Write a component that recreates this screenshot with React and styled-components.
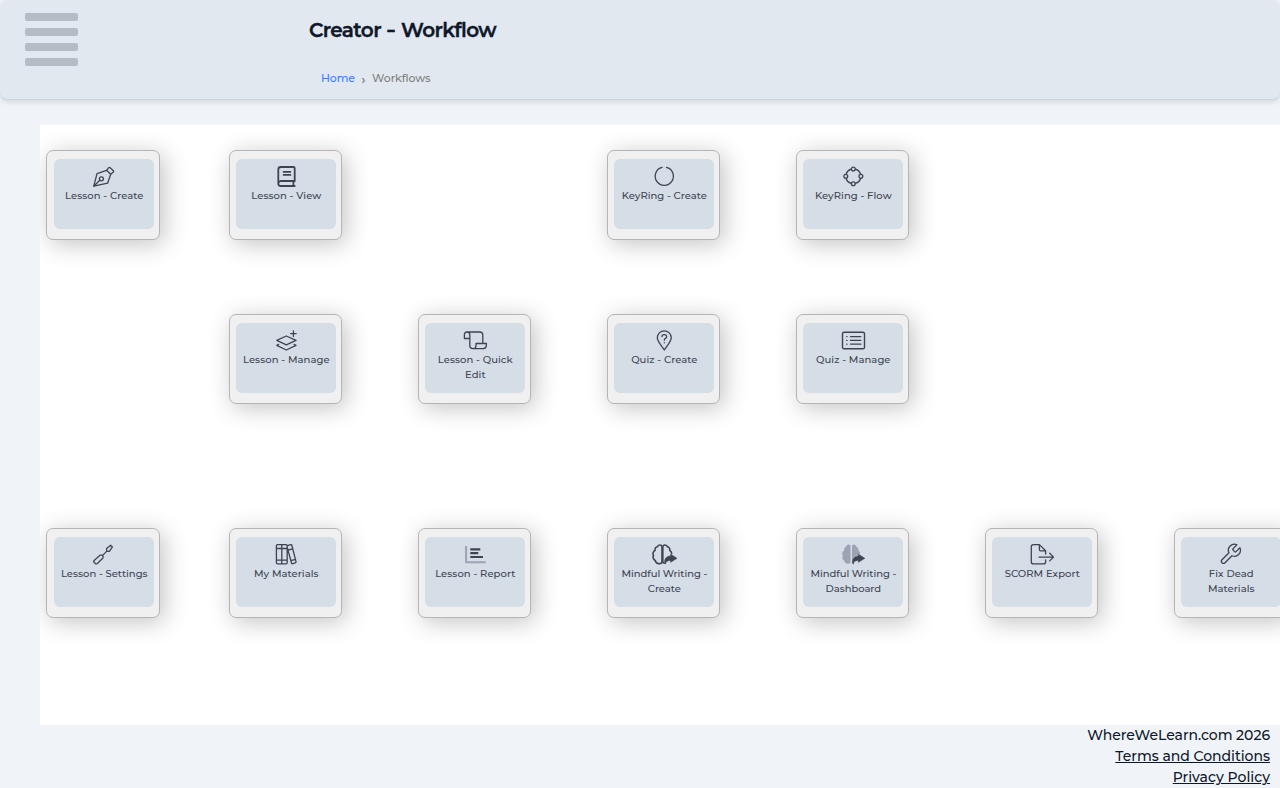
import React from "react";
import styled, { createGlobalStyle } from "styled-components";

const GlobalStyle = createGlobalStyle`
  * { box-sizing: border-box; }
  html, body { margin: 0; height: 100%; overflow: hidden; }
  body {
    background: #f0f4f9;
    color: #0f172a;
    font-family: Montserrat, Inter, sans-serif;
    font-size: 14px;
    font-weight: 500;
  }
`;

const Header = styled.header`
  display: flex;
  height: 100px;
  background: #e1e8f0;
  border-bottom: 1px solid #cbd5e1;
  border-radius: 8px;
  box-shadow: 0 2px 5px rgba(0, 0, 0, 0.12);
`;

const MenuButton = styled.button`
  display: flex;
  flex-direction: column;
  gap: 7px;
  width: 309px;
  padding: 13px 0 0 25px;
  border: 0;
  background: none;
`;

const MenuBar = styled.span`
  width: 52.5px;
  height: 8px;
  border-radius: 2px;
  background: #b5bcc6;
`;

const Heading = styled.div`
  display: flex;
  flex-direction: column;
`;

const Title = styled.h1`
  margin: 17px 0 0;
  font-size: 20px;
  line-height: 26px;
  font-weight: 600;
  letter-spacing: -0.62px;
  word-spacing: 1.6px;
  -webkit-text-stroke: 0.35px currentColor;
  white-space: nowrap;
`;

const Dash = styled.span`
  display: inline-block;
  transform: scaleX(1.3);
`;

const Breadcrumb = styled.nav`
  display: flex;
  margin: 27px 0 0 12px;
  font-size: 11px;
  line-height: 16px;
  color: #808080;
  letter-spacing: -0.06px;
`;

const Separator = styled.span`
  width: 17px;
  padding-top: 2px;
  text-align: center;
  font-size: 12px;
  font-weight: 600;
`;

const HomeLink = styled.a`
  color: #3b7ff6;
`;

const Canvas = styled.main`
  display: grid;
  grid-template-columns: 183px repeat(6, 189px);
  grid-template-rows: 164px 214px 90px;
  align-content: start;
  width: 1240px;
  height: 600px;
  margin: 25px 0 0 40px;
  padding: 25px 0 0 6px;
  background: #fff;
  overflow: hidden;
`;

const Card = styled.a`
  grid-column: ${(p) => p.$col};
  grid-row: ${(p) => p.$row};
  width: ${(p) => (p.$col === 1 ? 114 : 113)}px;
  height: 90px;
  padding: 8px 0 0 ${(p) => (p.$col === 1 ? 7 : 6)}px;
  border: 1px solid #b5b5b5;
  border-radius: 7px;
  background: #f0f0f0;
  box-shadow: 4px 4px 24px rgba(0, 0, 0, 0.24);
`;

const Tile = styled.div`
  display: flex;
  flex-direction: column;
  align-items: center;
  width: 100px;
  height: 70px;
  padding-top: 6px;
  border-radius: 6px;
  background: #d5dde6;
  color: #3f4453;
`;

const Icon = styled.svg`
  width: 28px;
  height: 22px;
  margin-bottom: 1px;
  flex: none;
  fill: none;
  stroke: currentColor;
  stroke-width: 1.3;
  stroke-linejoin: round;
  stroke-linecap: round;
`;

const Label = styled.span`
  padding-left: 0.6px;
  font-size: 10px;
  line-height: 15px;
  text-align: center;
  white-space: pre;
  letter-spacing: ${(p) => p.$spacing}px;
`;

const Footer = styled.footer`
  display: flex;
  flex-direction: column;
  align-items: flex-end;
  padding-right: 10px;
  line-height: 21px;
`;

const FooterText = styled.span`
  letter-spacing: ${(p) => p.$spacing}px;
`;

const FooterLink = styled(FooterText).attrs({ as: "a" })`
  text-decoration: underline;
`;

const brainLeft =
  "M12 3.6C11.5 1.4 8.2 1.4 7.4 3.8 5.6 4 4.6 5.8 5.1 7.4 3.3 8.4 2.3 10.6 3.5 12.4 2.4 14.5 3.6 16.7 5.3 17.4 5.6 20.8 11.2 22.2 12 18.8Z";
const brainRight =
  "M12.8 3.6C13.3 1.4 16.7 1.4 17.4 3.8 19.2 4 20.2 5.8 19.7 7.4 21 8.2 21.7 9.2 21.7 10.6";
const shareArrow =
  "M15.6 20.6H14.9C14 16.5 15.8 13 20.6 12.9V11.2L27 15.3 20.6 19.3V17.5C17.5 17.3 16.1 18.4 15.6 20.6Z";

const icons = {
  pen: (
    <>
      <path d="M3.8 21.2 7 8.7 16.6 5.3 20.7 9.2 17.6 18.2Z" />
      <path d="m16.6 5.3 2.1-2.6q.7-.6 1.4 0L23.4 5.7q.6.7 0 1.4L20.7 9.2M4 21l5.8-5.7" />
      <circle cx="11.4" cy="13.8" r="2" />
    </>
  ),
  book: (
    <g strokeWidth="1.8">
      <path d="M22.7 16.2V3.2q0-1.2-1.2-1.2H8.8Q6.3 2 6.3 4.5V18.5Q6.3 21 8.8 21H22.7M6.5 17.9Q7 16 8.8 16H22.7M21.4 16.2V21" />
      <path d="M11.6 6.8h6.8M11.6 9.9h6.8" />
    </g>
  ),
  ring: <path d="M12.1 2.4A9.1 9.1 0 1 0 16.5 2.4" />,
  nodes: (
    <>
      <path d="M12 4.2A7.8 7.8 0 0 0 7.1 9.1M7.1 13.7A7.8 7.8 0 0 0 12 18.4M16.6 18.4A7.8 7.8 0 0 0 21.6 13.7M21.6 9.1A7.8 7.8 0 0 0 16.6 4.2" />
      <circle cx="14.3" cy="4" r="1.9" />
      <circle cx="14.3" cy="18.7" r="1.9" />
      <circle cx="6.8" cy="11.3" r="1.9" />
      <circle cx="21.9" cy="11.3" r="1.9" />
    </>
  ),
  layers: (
    <path d="M4.8 11.4 14.3 7l9.7 4.4-9.7 4.4ZM6.6 15.4l-1.8 1 9.5 4.6 9.7-4.6-1.8-1M21.4 1.8v5.6M18.6 4.6h5.6" />
  ),
  scroll: (
    <path d="M6 3H18.8Q21.8 3 21.8 6V14.4M6 3Q3.4 3 3.4 5.6V9.5H8.8M6 3Q8.8 3 8.8 5.7V16.8Q8.8 19.6 11.8 19.6H22.3Q25.2 19.4 25.4 16.2V14.5H15V16.7Q15 19.6 12 19.6" />
  ),
  pin: (
    <>
      <path d="M14.3 21C12 17.6 7.3 12.4 7.3 8.8A7 7 0 0 1 21.3 8.8C21.3 12.4 16.6 17.6 14.3 21Z" />
      <path d="M12 7.5Q12 5.6 14 5.6H14.8Q16.7 5.8 16.7 7.5 16.7 8.7 15.5 9.3 14.3 9.9 14.3 11.2M14.3 13.7V13.8" />
    </>
  ),
  list: (
    <>
      <rect x="3.5" y="3.2" width="22" height="16.6" rx="1.6" strokeWidth="1.4" />
      <path d="M11.5 7.6H21.8M11.5 11.4H21.8M11.5 15.2H21.8M7.7 7.6H8M7.7 11.4H8M7.7 15.2H8" />
    </>
  ),
  screwdriver: (
    <path d="M10 12.2H12.2L13 13V15L7.3 20.5Q6.2 21.3 5.3 20.5L4.1 19.3Q3.4 18.4 4.1 17.4ZM12.7 12.4 16.6 8.4M16.6 8.4V5.6L20.6 2.2 22.4 3.9 19.3 8.4Z" />
  ),
  books: (
    <path d="M5.5 1.7H9.8V20.8H5.5Q4.4 20.8 4.4 19.7V2.8Q4.4 1.7 5.5 1.7ZM9.8 1.7H14Q15.2 1.7 15.2 2.8V19.7Q15.2 20.8 14 20.8H9.8M4.4 5.5H15.2M4.4 17.2H15.2M15.5 2.6 18.7 1.7Q19.6 1.5 19.9 2.5L24 18.7Q24.2 19.6 23.2 19.9L20.7 20.7Q19.8 20.9 19.5 20L15.2 4.4M16 7 20.9 5.9M18.8 17.6 23.5 16.4" />
  ),
  chart: (
    <g strokeWidth="2.2" strokeLinecap="butt">
      <path d="M5.1 3V19.2H24.7" stroke="#9ca3b2" strokeWidth="2" />
      <path d="M9.3 6.4H19.3M9.3 10.2H17.3M9.3 14H22" />
    </g>
  ),
  brain: (
    <>
      <path d={brainLeft} strokeWidth="1.6" />
      <path d={`${brainRight}M12.8 3.6V19.4L14 20.2`} strokeWidth="1.6" />
      <path d={shareArrow} fill="currentColor" strokeWidth=".6" />
    </>
  ),
  brainSolid: (
    <>
      <g fill="#9ca3b2" stroke="none" transform="translate(.5)">
        <path d="M11 2.4C9.5.8 7.1 1.6 6.7 3.8 5 4.2 4.3 6 4.7 7.3 2.8 8.8 2.3 10.8 3.3 12.6 2.2 15 3 16.9 4.8 17.8 5.3 20.8 9.2 21.6 11 19.7Z" />
        <path d="M12.5 2.4C14 .8 16.4 1.6 16.8 3.8 18.5 4.2 19.2 6 18.8 7.3 20 8.2 20.6 9.3 20.7 10.2L18.4 12C14.9 12.2 13.1 14.3 12.5 18Z" />
      </g>
      <path d={shareArrow} fill="currentColor" strokeWidth=".6" transform="translate(-1.2)" />
    </>
  ),
  fileExport: (
    <path d="M17.6 11V7.8L11.4 1.6H5.5Q3.3 1.6 3.3 3.8V18.7Q3.3 20.9 5.5 20.9H15.4Q17.6 20.9 17.6 18.7V17M11.4 1.6V6.7Q11.4 7.8 12.5 7.8H17.6M11 14.1H25.4M21.7 10.3 25.5 14.1 21.7 17.9" />
  ),
  wrench: (
    <path
      transform="translate(1.4 -.7)"
      d="M14.7 6.3a1 1 0 0 0 0 1.4l1.6 1.6a1 1 0 0 0 1.4 0l3.77-3.77a6 6 0 0 1-7.94 7.94l-6.91 6.91a2.12 2.12 0 0 1-3-3l6.91-6.91a6 6 0 0 1 7.94-7.94l-3.76 3.76z"
    />
  ),
};

const cards = [
  { col: 1, row: 1, icon: "pen", label: "Lesson - Create" },
  { col: 2, row: 1, icon: "book", label: "Lesson - View" },
  { col: 4, row: 1, icon: "ring", label: "KeyRing - Create", spacing: 0.03 },
  { col: 5, row: 1, icon: "nodes", label: "KeyRing - Flow" },
  { col: 2, row: 2, icon: "layers", label: "Lesson - Manage" },
  { col: 3, row: 2, icon: "scroll", label: "Lesson - Quick\nEdit" },
  { col: 4, row: 2, icon: "pin", label: "Quiz - Create" },
  { col: 5, row: 2, icon: "list", label: "Quiz - Manage" },
  { col: 1, row: 3, icon: "screwdriver", label: "Lesson - Settings", spacing: 0.02 },
  { col: 2, row: 3, icon: "books", label: "My Materials" },
  { col: 3, row: 3, icon: "chart", label: "Lesson - Report" },
  { col: 4, row: 3, icon: "brain", label: "Mindful Writing -\nCreate", spacing: -0.05 },
  { col: 5, row: 3, icon: "brainSolid", label: "Mindful Writing -\nDashboard", spacing: -0.05 },
  { col: 6, row: 3, icon: "fileExport", label: "SCORM Export" },
  { col: 7, row: 3, icon: "wrench", label: "Fix Dead\nMaterials" },
];

export default function App() {
  return (
    <>
      <GlobalStyle />
      <Header>
        <MenuButton aria-label="Menu">
          <MenuBar />
          <MenuBar />
          <MenuBar />
          <MenuBar />
        </MenuButton>
        <Heading>
          <Title>
            Creator <Dash>-</Dash> Workflow
          </Title>
          <Breadcrumb>
            <HomeLink>Home</HomeLink>
            <Separator>›</Separator>
            <span>Workflows</span>
          </Breadcrumb>
        </Heading>
      </Header>
      <Canvas>
        {cards.map((c) => (
          <Card key={c.label} $col={c.col} $row={c.row}>
            <Tile>
              <Icon viewBox="0 0 28 22">{icons[c.icon]}</Icon>
              <Label $spacing={c.spacing ?? 0.06}>{c.label}</Label>
            </Tile>
          </Card>
        ))}
      </Canvas>
      <Footer>
        <FooterText $spacing={-0.04}>WhereWeLearn.com 2026</FooterText>
        <FooterLink $spacing={-0.02}>Terms and Conditions</FooterLink>
        <FooterLink $spacing={0}>Privacy Policy</FooterLink>
      </Footer>
    </>
  );
}
